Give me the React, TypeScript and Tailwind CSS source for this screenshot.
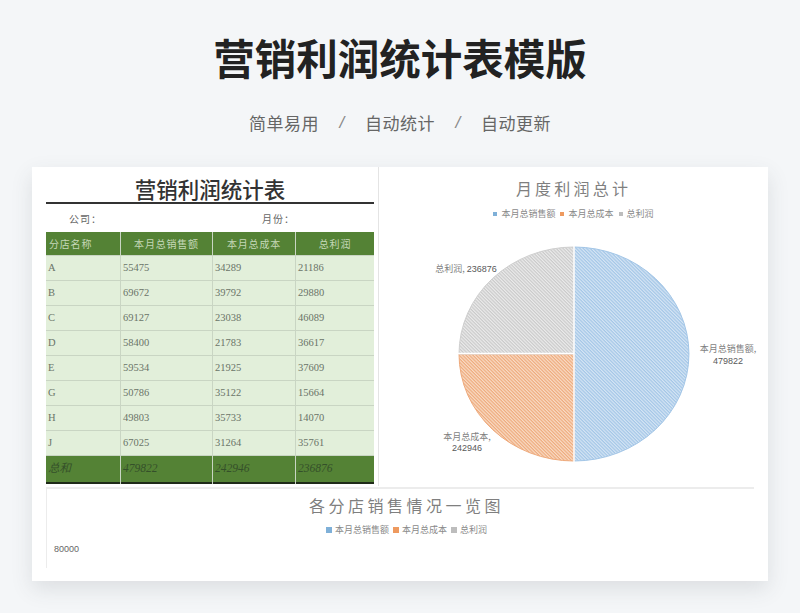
const CJK = "font-['Noto_Sans_CJK_SC',sans-serif]";
const headers = ["分店名称", "本月总销售额", "本月总成本", "总利润"];
const rows = [
  ["A", "55475", "34289", "21186"],
  ["B", "69672", "39792", "29880"],
  ["C", "69127", "23038", "46089"],
  ["D", "58400", "21783", "36617"],
  ["E", "59534", "21925", "37609"],
  ["G", "50786", "35122", "15664"],
  ["H", "49803", "35733", "14070"],
  ["J", "67025", "31264", "35761"],
];
const totals = ["总和", "479822", "242946", "236876"];
const legend = [
  { name: "本月总销售额", color: "bg-[#7fb0d8]" },
  { name: "本月总成本", color: "bg-[#ee9a5f]" },
  { name: "总利润", color: "bg-[#bdbdbd]" },
];

function Legend({ size, gap, inner }: { size: string; gap: string; inner: string }) {
  return (
    <div className={`flex items-center justify-center text-[9px] leading-none text-[#8a8a8a] ${gap}`}>
      {legend.map((l) => (
        <div key={l.name} className={`flex items-center ${inner}`}>
          <span className={`${size} ${l.color}`} />
          <span>{l.name}</span>
        </div>
      ))}
    </div>
  );
}

function PieChart() {
  return (
    <svg width="390" height="247" viewBox="0 0 390 247" className="block">
      <defs>
        <pattern id="hBlue" width="2.4" height="2.4" patternUnits="userSpaceOnUse" patternTransform="rotate(45)">
          <rect width="2.4" height="2.4" fill="#d5e5f4" />
          <rect width="2.4" height="1.2" fill="#a3c6e7" />
        </pattern>
        <pattern id="hOrange" width="2.4" height="2.4" patternUnits="userSpaceOnUse" patternTransform="rotate(45)">
          <rect width="2.4" height="2.4" fill="#f9dcc6" />
          <rect width="2.4" height="1.2" fill="#eeaa7c" />
        </pattern>
        <pattern id="hGray" width="2.4" height="2.4" patternUnits="userSpaceOnUse" patternTransform="rotate(45)">
          <rect width="2.4" height="2.4" fill="#ebebeb" />
          <rect width="2.4" height="1.2" fill="#cacaca" />
        </pattern>
      </defs>
      <path d="M195 124 L195 17 A115 107 0 0 1 195 231 Z" fill="url(#hBlue)" stroke="#a3c6e7" />
      <path d="M195 124 L195 231 A115 107 0 0 1 80 124 Z" fill="url(#hOrange)" stroke="#eeaa7c" />
      <path d="M195 124 L80 124 A115 107 0 0 1 195 17 Z" fill="url(#hGray)" stroke="#cfcfcf" />
      <path d="M195 16 L195 232 M79 123.500 L195 123.500" stroke="#ffffff" strokeWidth="1.500" fill="none" />
      <g fontSize="9" textAnchor="middle" fill="#7f7f7f" fontFamily="'Noto Sans CJK SC', sans-serif">
        <text x="87" y="42">
          总利润, <tspan fill="#595959" fontFamily="'Liberation Sans', sans-serif">236876</tspan>
        </text>
        <text x="349" y="122">本月总销售额,</text>
        <text x="349" y="133.500" fill="#595959" fontFamily="'Liberation Sans', sans-serif">479822</text>
        <text x="88" y="210">本月总成本,</text>
        <text x="88" y="220.500" fill="#595959" fontFamily="'Liberation Sans', sans-serif">242946</text>
      </g>
    </svg>
  );
}

export default function App() {
  return (
    <div className={`h-[613px] w-[800px] overflow-hidden bg-[#f4f6f8] ${CJK}`}>
      {/* Header */}
      <header className="flex h-[167px] flex-col items-center">
        <h1 className="mt-[30px] text-[41.500px] leading-[54px] font-bold text-[#222222]">营销利润统计表模版</h1>
        <div className="mt-[26px] flex items-center text-[17px] leading-[26px] tracking-[0.5px] text-[#666666]">
          <span>简单易用</span>
          <span className="mx-[17px] w-[12px] text-center text-[#888888] font-['Liberation_Sans',sans-serif] italic">/</span>
          <span>自动统计</span>
          <span className="mx-[17px] w-[12px] text-center text-[#888888] font-['Liberation_Sans',sans-serif] italic">/</span>
          <span>自动更新</span>
        </div>
      </header>

      {/* Card */}
      <main className="mx-[32px] h-[414px] w-[736px] overflow-hidden bg-white pl-[14px] shadow-[0_8px_20px_rgba(60,70,80,0.13)]">
        <div className="flex h-[320px]">
          {/* Table */}
          <section className="w-[328px] shrink-0">
            <h2 className="h-[37px] border-b-2 border-[#333333] pt-[9px] text-center text-[21.500px] leading-[26px] font-medium text-[#333333]">
              营销利润统计表
            </h2>
            <div className="flex h-[28px] items-center text-[10px] tracking-[1px] text-[#666666]">
              <span className="ml-[23px] w-[193px]">公司：</span>
              <span>月份：</span>
            </div>
            <div className="grid grid-cols-[74px_91px_82px_78px] gap-x-px bg-[#c9d5c3]">
              {headers.map((h, i) => (
                <div
                  key={h}
                  className={`flex h-[23px] items-center bg-[#548235] text-[10px] tracking-[0.8px] text-[#c5d8b8] ${i === 0 ? "pl-[3px]" : "justify-center"}`}
                >
                  {h}
                </div>
              ))}
              {rows.map((row) =>
                row.map((c, i) => (
                  <div
                    key={row[0] + i}
                    className="mt-px flex h-[24px] items-center bg-[#e2efda] pl-[2px] font-['Liberation_Serif',serif] text-[10.500px] text-[#6a7468]"
                  >
                    {c}
                  </div>
                )),
              )}
              {totals.map((t) => (
                <div
                  key={t}
                  className="mt-px flex h-[28px] items-center border-b-2 border-[#1f2a18] bg-[#548235] pl-[2px] font-['Liberation_Serif','Noto_Sans_CJK_SC',serif] text-[11.500px] text-[#34502a] italic"
                >
                  {t}
                </div>
              ))}
            </div>
          </section>

          {/* Pie chart */}
          <section className="ml-[4px] flex h-[319px] w-[390px] shrink-0 flex-col border-l border-[#e4e4e4]">
            <h3 className="mt-[10px] text-center text-[16px] leading-[22px] tracking-[3.2px] text-[#7f7f7f]">月度利润总计</h3>
            <div className="mt-[10px] h-[21px]">
              <Legend size="size-[4px]" gap="gap-[5px]" inner="gap-[4px]" />
            </div>
            <PieChart />
          </section>
        </div>

        {/* Bar chart, cut off below the card content */}
        <section className="h-[81px] w-[708px] border-t-[2px] border-l border-[#ececec] pt-[4px]">
          <h3 className="pl-[12px] text-center text-[16px] leading-[24px] tracking-[3.500px] text-[#7f7f7f]">各分店销售情况一览图</h3>
          <div className="mt-[8px] pl-[12px]">
            <Legend size="size-[6px]" gap="gap-[4px]" inner="gap-[3px]" />
          </div>
          <p className="mt-[9px] pl-[7px] font-['Liberation_Sans',sans-serif] text-[9px] leading-[12px] text-[#666666]">80000</p>
        </section>
      </main>
    </div>
  );
}
